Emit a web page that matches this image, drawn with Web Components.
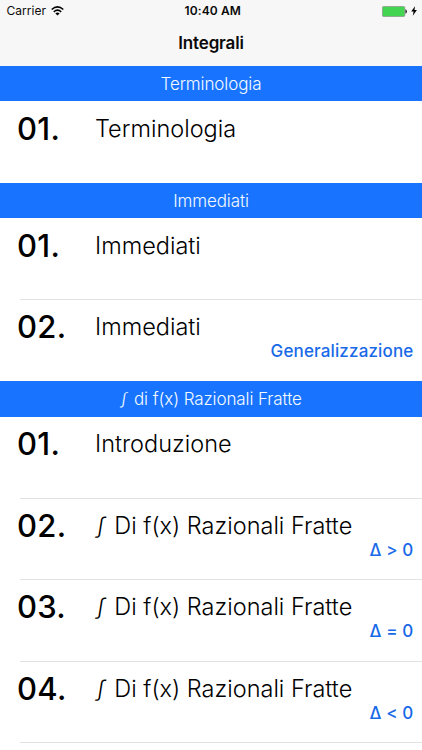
<!DOCTYPE html>
<html lang="it">
<head>
<meta charset="utf-8">
<title>Integrali</title>
<style>
html,body{margin:0;height:100%;overflow:hidden;background:#fff;font-family:Inter,"Liberation Sans",sans-serif;color:#000}
</style>
</head>
<body>
<integral-screen></integral-screen>
<script>
const define = (name, html) => customElements.define(name, class extends HTMLElement {
  constructor() {
    super();
    this.attachShadow({mode: "open"}).innerHTML = html;
  }
});

define("status-bar", `
<style>
:host{display:grid;grid-template-columns:1fr auto 1fr;align-items:center;height:22px;padding:0 5px 0 6.5px;font-size:12px;line-height:22px}
.left{display:flex;align-items:center;gap:4.5px;letter-spacing:.05px}
.time{font-weight:600;font-size:12px;letter-spacing:.1px;padding-left:2px}
.right{display:flex;align-items:center;justify-content:flex-end;gap:4px}
svg{display:block}
</style>
<div class="left"><span>Carrier</span>
<svg width="13" height="10" viewBox="0 0 13 10"><g fill="none" stroke="#000" stroke-width="1.6"><path d="M.7 3.5Q6.5-1.6 12.3 3.5"/><path d="M2.8 5.8Q6.5 2.5 10.2 5.8"/></g><path d="M4.4 7.4Q6.5 5.7 8.6 7.4L6.5 9.6Z"/></svg></div>
<span class="time">10:40 AM</span>
<div class="right">
<svg width="25" height="11" viewBox="0 0 25 11"><rect x=".4" y=".4" width="22.4" height="10.2" rx="1.4" fill="#43d551" stroke="#8b958c" stroke-width=".8"/><path d="M23.4 3.6h.5q1 .5 1 1.9t-1 1.9h-.5z" fill="#222"/></svg>
<svg width="6" height="10" viewBox="0 0 6 10"><path d="M4 .2L.2 5.6H2.6L1.8 9.8L5.9 4H3.5Z"/></svg></div>`);

define("nav-title", `
<style>
:host{display:block;text-align:center;font-size:17px;font-weight:600;line-height:43.4px;height:43.4px;letter-spacing:-.15px}
</style><slot></slot>`);

define("integral-sign", `
<style>
:host{display:inline-block;transform:translate(.06em,-.02em) skewX(-9deg) scaleY(.9);transform-origin:50% 58%;margin-right:.19em}
</style>∫`);

define("section-header", `
<style>
:host{display:block;height:35.7px;line-height:36px;background:#1874ff;color:#f4faff;text-align:center;font-size:17px;font-weight:300;letter-spacing:-.1px}
</style><slot></slot>`);

define("lesson-row", `
<style>
:host{display:grid;grid-template-columns:78px 1fr;grid-template-rows:54px 1fr;height:81.5px;box-sizing:border-box;padding:0 8px 0 17px;background:linear-gradient(#e2e2e4,#e2e2e4) 20px 100%/100% var(--line,1px) no-repeat}
:host([last]){--line:0px}
.num{font-size:31px;font-weight:500;line-height:var(--lead,54px);letter-spacing:.3px}
.name{font-size:23.5px;font-weight:300;line-height:var(--lead,54.4px);letter-spacing:0;white-space:nowrap}
.note{grid-column:1/3;text-align:right;font-size:17px;font-weight:500;color:#1769e8;line-height:20px;margin-top:-12.6px;letter-spacing:.15px;margin-right:.5px}
</style>
<span class="num"><slot name="number"></slot></span><span class="name"><slot></slot></span><span class="note"><slot name="note"></slot></span>`);

define("integral-screen", `
<style>
:host{display:flex;flex-direction:column;height:750px}
header{background:#f7f7f7;height:65.5px;flex:none}
status-bar,nav-title{color:#0a0a0a}
.roomy{--lead:55px}
</style>
<header><status-bar></status-bar><nav-title>Integrali</nav-title></header>
<main>
<section-header>Terminologia</section-header>
<lesson-row class="roomy" last><span slot="number">01.</span>Terminologia</lesson-row>
<section-header>Immediati</section-header>
<lesson-row class="roomy"><span slot="number">01.</span>Immediati</lesson-row>
<lesson-row last><span slot="number">02.</span>Immediati<span slot="note">Generalizzazione</span></lesson-row>
<section-header><integral-sign></integral-sign> di f(x) Razionali Fratte</section-header>
<lesson-row><span slot="number">01.</span>Introduzione</lesson-row>
<lesson-row><span slot="number">02.</span><integral-sign></integral-sign> Di f(x) Razionali Fratte<span slot="note">Δ &gt; 0</span></lesson-row>
<lesson-row><span slot="number">03.</span><integral-sign></integral-sign> Di f(x) Razionali Fratte<span slot="note">Δ = 0</span></lesson-row>
<lesson-row><span slot="number">04.</span><integral-sign></integral-sign> Di f(x) Razionali Fratte<span slot="note">Δ &lt; 0</span></lesson-row>
</main>`);
</script>
</body>
</html>
